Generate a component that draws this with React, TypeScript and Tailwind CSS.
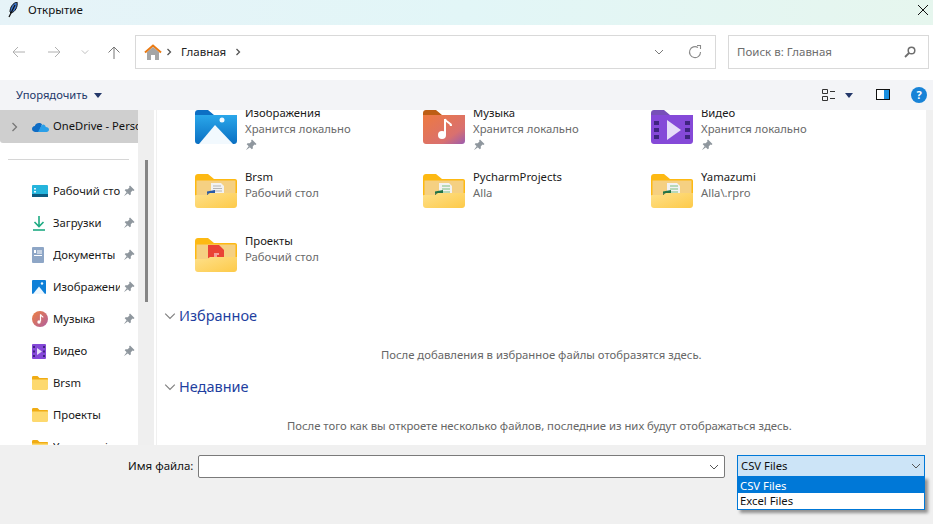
import React from "react";

const font = { fontFamily: '"Noto Sans", "Open Sans", sans-serif' };

function Pin({ className = "" }: { className?: string }) {
  return (
    <svg width="12" height="12" viewBox="0 0 12 12" className={className}>
      <path d="M7 .5 11.500 5 10.500 5.900 9.600 5.500 7.800 7.300 7.800 9.500 6.800 10.300 1.700 5.200 2.500 4.200 4.700 4.200 6.500 2.400 6.100 1.500Z" fill="#8f979e" />
      <path d="M3.800 7 .8 11.200 5 8.200Z" fill="#8f979e" />
    </svg>
  );
}

function Chevron({ color = "#7a7a7a", size = 10 }: { color?: string; size?: number }) {
  return (
    <svg width={size} height={size} viewBox="0 0 10 10">
      <path d="M1 3 5 7 9 3" fill="none" stroke={color} strokeWidth="1" />
    </svg>
  );
}

function SmallFolder() {
  return (
    <svg width="16" height="14" viewBox="0 0 16 14">
      <path d="M0 1.500C0 .7.5 0 1.200 0H5.500L7.500 2H15C15.600 2 16 2.400 16 3V5H0Z" fill="#f0ac14" />
      <path d="M0 3.500H16V12.800C16 13.500 15.500 14 14.800 14H1.200C.5 14 0 13.500 0 12.800Z" fill="#fdd96f" />
    </svg>
  );
}

function BigFolder({ kind }: { kind: "doc" | "sheet" | "red" }) {
  return (
    <svg width="42" height="34" viewBox="0 0 42 34">
      <path d="M0 3C0 1.300 1.300 0 3 0H13L19 5H40C41.200 5 42 5.800 42 7V22H0Z" fill="#fdb913" />
      <path d="M1.500 6.500H40.500V22H1.500Z" fill="#f5d082" />
      {kind === "doc" && (
        <g>
          <path d="M16 9H26L29 12V20H16Z" fill="#f2f2f2" />
          <path d="M18 12H26M18 14.500H27M18 17H27" stroke="#b5b5b5" strokeWidth="1" />
          <path d="M12 17.500 20 16V19.500H12Z" fill="#2a5aa6" />
          <path d="M12 19.500H16V22H12Z" fill="#21497f" />
        </g>
      )}
      {kind === "sheet" && (
        <g>
          <path d="M16 9H26L29 12V20H16Z" fill="#f2f2f2" />
          <path d="M19 11H27V13H19ZM19 14H27V16H19ZM19 17H27V19H19Z" fill="#b7d8b8" />
          <path d="M12 17.500 20 16V19.500H12Z" fill="#217346" />
          <path d="M12 19.500H16V22H12Z" fill="#185c37" />
        </g>
      )}
      {kind === "red" && (
        <g>
          <path d="M13 7H24L29 12V22H13Z" fill="#ea4335" />
          <path d="M19 16H24M19 18H22" stroke="#fff" strokeWidth="1.200" />
        </g>
      )}
      <path d="M0 22C0 21.300.5 21 1.200 21H12L15 19H42V31C42 32.700 40.700 34 39 34H3C1.300 34 0 32.700 0 31Z" fill="url(#fg)" />
      <defs>
        <linearGradient id="fg" x1="0" y1="0" x2="1" y2="1">
          <stop offset="0" stopColor="#fee08a" />
          <stop offset="1" stopColor="#fdca49" />
        </linearGradient>
      </defs>
    </svg>
  );
}

function PicturesBig() {
  return (
    <svg width="42" height="34" viewBox="0 0 42 34">
      <path d="M0 3C0 1.300 1.300 0 3 0H13L19 5H40L42 8H0Z" fill="#0c6fc4" />
      <path d="M0 5H42V31C42 32.700 40.700 34 39 34H3C1.300 34 0 32.700 0 31Z" fill="url(#pb)" />
      <path d="M4 34 20 15 38 34Z" fill="#f2f9fe" />
      <circle cx="27" cy="10" r="2.500" fill="#f2f9fe" />
      <defs>
        <linearGradient id="pb" x1="0" y1="0" x2="0" y2="1">
          <stop offset="0" stopColor="#2aa7ea" />
          <stop offset="1" stopColor="#0a6fc2" />
        </linearGradient>
      </defs>
    </svg>
  );
}

function MusicBig() {
  return (
    <svg width="42" height="34" viewBox="0 0 42 34">
      <path d="M0 3C0 1.300 1.300 0 3 0H13L19 5H40L42 8H0Z" fill="#bd5e14" />
      <path d="M0 5H42V31C42 32.700 40.700 34 39 34H3C1.300 34 0 32.700 0 31Z" fill="url(#mb)" />
      <path d="M22 9V25" stroke="#fff" strokeWidth="2" />
      <path d="M22 9C23 13 28 12 28 16" fill="none" stroke="#fff" strokeWidth="2" />
      <circle cx="19" cy="25" r="4" fill="#fff" />
      <defs>
        <linearGradient id="mb" x1="0" y1="0" x2="1" y2="1">
          <stop offset="0" stopColor="#ee7a40" />
          <stop offset="0.700" stopColor="#d9706f" />
          <stop offset="1" stopColor="#9a5cb0" />
        </linearGradient>
      </defs>
    </svg>
  );
}

function VideoBig() {
  return (
    <svg width="42" height="34" viewBox="0 0 42 34">
      <path d="M0 3C0 1.300 1.300 0 3 0H13L19 5H40L42 8H0Z" fill="#7750b8" />
      <path d="M0 5H42V31C42 32.700 40.700 34 39 34H3C1.300 34 0 32.700 0 31Z" fill="#8549d8" />
      <path d="M3 11H8V15H3ZM3 18H8V22H3ZM3 25H8V29H3ZM34 11H39V15H34ZM34 18H39V22H34ZM34 25H39V29H34Z" fill="#3f2480" />
      <path d="M16 10 30 20 16 30Z" fill="#e6dcf8" />
    </svg>
  );
}

function Desktop() {
  return (
    <svg width="16" height="14" viewBox="0 0 16 14">
      <rect width="16" height="12" y="1" rx="1" fill="#25b4dc" />
      <rect y="10" width="16" height="3" fill="#0c5a80" />
      <path d="M2 4H4V5.500H2ZM2 7H4V8.500H2Z" fill="#e8f8ff" />
    </svg>
  );
}

function Download() {
  return (
    <svg width="14" height="15" viewBox="0 0 14 15">
      <path d="M7 0V10M2.500 6 7 10.500 11.500 6" fill="none" stroke="#1eab83" strokeWidth="1.600" />
      <path d="M1 14H13" stroke="#1eab83" strokeWidth="1.600" />
    </svg>
  );
}

function Docs() {
  return (
    <svg width="13" height="16" viewBox="0 0 13 16">
      <rect width="12" height="16" rx="1" fill="#8ea6c6" />
      <path d="M5 4H10M5 6H10M2 8.500H10" stroke="#fff" strokeWidth="1" />
      <rect x="2" y="3" width="2" height="3" fill="#fff" />
    </svg>
  );
}

function Pictures() {
  return (
    <svg width="14" height="14" viewBox="0 0 14 14">
      <rect width="14" height="14" rx="1" fill="#0f80d8" />
      <path d="M1 14 7 6.500 13 14Z" fill="#eef8ff" />
      <circle cx="10" cy="3.500" r="1.200" fill="#eef8ff" />
    </svg>
  );
}

function Music() {
  return (
    <svg width="16" height="16" viewBox="0 0 16 16">
      <circle cx="8" cy="8" r="8" fill="url(#ms)" />
      <path d="M8.500 3.500V10.500" stroke="#fff" strokeWidth="1.200" />
      <path d="M8.500 3.500C9 5.500 11 5 11 6.500" fill="none" stroke="#fff" strokeWidth="1.100" />
      <circle cx="7" cy="11" r="1.700" fill="#fff" />
      <defs>
        <linearGradient id="ms" x1="0" y1="0" x2="1" y2="1">
          <stop offset="0" stopColor="#ee8040" />
          <stop offset="1" stopColor="#b05fa0" />
        </linearGradient>
      </defs>
    </svg>
  );
}

function Video() {
  return (
    <svg width="14" height="15" viewBox="0 0 14 15">
      <rect width="14" height="15" rx="1" fill="#8549d8" />
      <path d="M1 2H3V4H1ZM1 6.500H3V8.500H1ZM1 11H3V13H1ZM11 2H13V4H11ZM11 6.500H13V8.500H11ZM11 11H13V13H11Z" fill="#3f2480" />
      <path d="M5 4 10 7.500 5 11Z" fill="#e6dcf8" />
    </svg>
  );
}

function OneDrive() {
  return (
    <svg width="17" height="11" viewBox="0 0 17 11" className="shrink-0">
      <path d="M3.500 11C1.500 11 0 9.600 0 8 0 6.400 1.200 5.300 2.800 5.100 3.300 3.300 5 2 7 2 8.200 2 9.300 2.500 10 3.300L7 11Z" fill="#0f6cc4" />
      <path d="M6 11 9.500 4.500C11.300 2.500 13.300 4 13.800 6 15.600 6 17 7.100 17 8.600 17 10 16 11 14.500 11Z" fill="#2a9fe8" />
    </svg>
  );
}

function Feather() {
  return (
    <svg width="10" height="16" viewBox="0 0 10 16">
      <path d="M9 0C5 1 2 5 2 10L3 11C7 10 10 5 9 0Z" fill="#3a73c8" stroke="#111" strokeWidth="1" />
      <path d="M7 3 1 15" stroke="#111" strokeWidth="1.200" />
    </svg>
  );
}

function Home() {
  return (
    <svg width="18" height="17" viewBox="0 0 18 17">
      <path d="M3 8 9 3 15 8V16H11V11H7V16H3Z" fill="#a5a5a5" />
      <path d="M1 8.500 9 1.500 17 8.500" fill="none" stroke="#ea7a13" strokeWidth="2" />
    </svg>
  );
}

function ArrowLeft({ color }: { color: string }) {
  return (
    <svg width="14" height="12" viewBox="0 0 14 12">
      <path d="M13 6H1M6 1 1 6 6 11" fill="none" stroke={color} strokeWidth="1" />
    </svg>
  );
}

function ArrowRight({ color }: { color: string }) {
  return (
    <svg width="14" height="12" viewBox="0 0 14 12">
      <path d="M1 6H13M8 1 13 6 8 11" fill="none" stroke={color} strokeWidth="1" />
    </svg>
  );
}

function Crumb() {
  return (
    <svg width="6" height="8" viewBox="0 0 6 8">
      <path d="M1.500 1 4.500 4 1.500 7" fill="none" stroke="#555" strokeWidth="1.300" />
    </svg>
  );
}

const sideItems: { icon: React.ReactNode; label: string; pin: boolean }[] = [
  { icon: <Desktop />, label: "Рабочий стол", pin: true },
  { icon: <Download />, label: "Загрузки", pin: true },
  { icon: <Docs />, label: "Документы", pin: true },
  { icon: <Pictures />, label: "Изображения", pin: true },
  { icon: <Music />, label: "Музыка", pin: true },
  { icon: <Video />, label: "Видео", pin: true },
  { icon: <SmallFolder />, label: "Brsm", pin: false },
  { icon: <SmallFolder />, label: "Проекты", pin: false },
  { icon: <SmallFolder />, label: "Yamazumi", pin: false },
];

const tiles: { icon: React.ReactNode; name: string; sub: string; pin: boolean }[] = [
  { icon: <PicturesBig />, name: "Изображения", sub: "Хранится локально", pin: true },
  { icon: <MusicBig />, name: "Музыка", sub: "Хранится локально", pin: true },
  { icon: <VideoBig />, name: "Видео", sub: "Хранится локально", pin: true },
  { icon: <BigFolder kind="doc" />, name: "Brsm", sub: "Рабочий стол", pin: false },
  { icon: <BigFolder kind="sheet" />, name: "PycharmProjects", sub: "Alla", pin: false },
  { icon: <BigFolder kind="sheet" />, name: "Yamazumi", sub: "Alla\\.rpro", pin: false },
  { icon: <BigFolder kind="red" />, name: "Проекты", sub: "Рабочий стол", pin: false },
];

function Section({ title, text, indent }: { title: string; text: string; indent: string }) {
  return (
    <div>
      <div className="flex h-[22px] items-center gap-[3px] pl-[7px]">
        <Chevron size={12} color="#808080" />
        <span className="text-[14.5px] text-[#1f3fa0]">{title}</span>
      </div>
      <div className={`mt-[19px] h-[30px] text-[11.3px] leading-[18px] text-[#666] ${indent}`}>{text}</div>
    </div>
  );
}

export default function App() {
  return (
    <div style={font} className="relative flex h-[524px] w-[933px] flex-col overflow-hidden bg-[#f0f0f0] text-[11.5px] text-black">
      <div className="flex h-[25px] items-center bg-gradient-to-r from-[#e6f3f8] via-[#e2f6f7] to-[#e6f6ee] pb-[6px] pl-[8px] pr-[3px]">
        <Feather />
        <span className="ml-[10px] text-[11.5px] text-[#111]">Открытие</span>
        <svg className="ml-auto" width="14" height="14" viewBox="0 0 14 14">
          <path d="M2 2 12 12M12 2 2 12" stroke="#111" strokeWidth="1" />
        </svg>
      </div>

      <div className="flex h-[55px] items-center bg-white pb-[1px] pl-[12px] pr-[4px]">
        <ArrowLeft color="#b0b0b0" />
        <span className="ml-[21px]"><ArrowRight color="#b0b0b0" /></span>
        <span className="ml-[20px]"><Chevron color="#b0b0b0" size={8} /></span>
        <span className="ml-[18px]"><svg width="14" height="13" viewBox="0 0 14 13"><path d="M7 13V1M1.500 6.500 7 1 12.500 6.500" fill="none" stroke="#777" strokeWidth="1" /></svg></span>
        <div className="ml-[14px] flex h-[34px] w-[581px] shrink-0 items-center border border-[#d9d9d9] pl-[8px] pr-[13px]">
          <Home />
          <span className="ml-[4px]"><Crumb /></span>
          <span className="ml-[9px] text-[11.5px] text-[#222]">Главная</span>
          <span className="ml-[9px]"><Crumb /></span>
          <span className="ml-auto"><Chevron size={10} /></span>
          <svg className="ml-[24px]" width="14" height="14" viewBox="0 0 14 14">
            <path d="M12.500 7A5.500 5.500 0 1 1 10 2.500" fill="none" stroke="#8a8a8a" strokeWidth="1.100" />
            <path d="M9 .5H12.500V4" fill="none" stroke="#8a8a8a" strokeWidth="1.100" />
          </svg>
        </div>
        <div className="ml-[12px] flex h-[34px] w-[201px] shrink-0 items-center border border-[#d9d9d9] pl-[8px] pr-[12px]">
          <span className="text-[11.5px] text-[#6d6d6d]">Поиск в: Главная</span>
          <svg className="ml-auto" width="12" height="12" viewBox="0 0 12 12">
            <circle cx="7.500" cy="4.500" r="3.300" fill="none" stroke="#6e6e6e" strokeWidth="1.500" />
            <path d="M5 7 1 11" stroke="#6e6e6e" strokeWidth="1.800" />
          </svg>
        </div>
      </div>

      <div className="flex h-[30px] items-center bg-[#f3f4f7] pl-[16px] pr-[6px]">
        <span className="text-[11.2px] text-[#24386a]">Упорядочить</span>
        <svg className="ml-[6px]" width="8" height="5" viewBox="0 0 8 5"><path d="M0 0H8L4 5Z" fill="#24386a" /></svg>
        <svg className="ml-auto" width="14" height="14" viewBox="0 0 14 14">
          <path d="M.5 1.500H5.500V5.500H.5ZM.5 8.500H5.500V12.500H.5Z" fill="none" stroke="#333" strokeWidth="1" />
          <path d="M8 3.500H13M8 10.500H13" stroke="#333" strokeWidth="1" />
        </svg>
        <svg className="ml-[9px]" width="8" height="5" viewBox="0 0 8 5"><path d="M0 0H8L4 5Z" fill="#24386a" /></svg>
        <svg className="ml-[23px]" width="14" height="12" viewBox="0 0 14 12">
          <rect x=".5" y=".5" width="13" height="10" fill="#fff" stroke="#111" />
          <rect x="8" y="1" width="5" height="9" fill="#1a8fe0" />
        </svg>
        <span className="ml-[21px] flex h-[16px] w-[16px] items-center justify-center rounded-full bg-[#1883d7] text-[11px] font-bold text-white">?</span>
      </div>

      <div className="flex h-[335px] overflow-hidden">
        <div className="flex w-[138px] shrink-0 flex-col overflow-hidden bg-white">
          <div className="flex h-[33px] shrink-0 items-center overflow-hidden rounded-bl-[3px] bg-[#cfcfcf]">
            <span className="ml-[11px] w-[21px] shrink-0"><svg width="7" height="10" viewBox="0 0 7 10"><path d="M1.500 1 5.500 5 1.500 9" fill="none" stroke="#777" strokeWidth="1.300" /></svg></span>
            <OneDrive />
            <span className="ml-[4px] shrink-0 whitespace-nowrap text-[11.2px] text-[#111]">OneDrive - Personal</span>
          </div>
          <div className="ml-[8px] mt-[16px] h-px w-[121px] shrink-0 bg-[#d6d6d6]" />
          <div className="mt-[15px] flex flex-col">
            {sideItems.map((it) => (
              <div key={it.label} className="flex h-[32px] shrink-0 items-center">
                <span className="ml-[32px] flex w-[21px] shrink-0 items-center">{it.icon}</span>
                <span className="w-[67px] shrink-0 overflow-hidden whitespace-nowrap text-[11.3px] text-[#1a1a1a]">{it.label}</span>
                {it.pin && <Pin className="ml-[3px]" />}
              </div>
            ))}
          </div>
        </div>

        <div className="flex w-[16px] shrink-0 justify-center bg-[#efefef] pt-[50px]">
          <div className="h-[142px] w-[3px] bg-[#858585]" />
        </div>
        <div className="w-[2px] shrink-0 bg-white" />
        <div className="w-px shrink-0 bg-[#f0f0f0]" />

        <div className="flex w-[769px] shrink-0 flex-col overflow-hidden bg-white">
          <div className="grid grid-cols-[228px_228px_228px] auto-rows-[64px] pl-[38px]">
            {tiles.map((t) => (
              <div key={t.name} className="flex items-start gap-[8px]">
                <span className="shrink-0">{t.icon}</span>
                <div className="-mt-[5px] flex flex-col">
                  <span className="h-[16px] text-[11.3px] leading-[16px] text-[#1a1a1a]">{t.name}</span>
                  <span className="h-[16px] text-[11.3px] leading-[16px] text-[#6a6a6a]">{t.sub}</span>
                  {t.pin && <span className="flex h-[16px] items-center"><Pin /></span>}
                </div>
              </div>
            ))}
          </div>
          <div className="mt-[3px]">
            <Section title="Избранное" text="После добавления в избранное файлы отобразятся здесь." indent="pl-[224px]" />
            <Section title="Недавние" text="После того как вы откроете несколько файлов, последние из них будут отображаться здесь." indent="pl-[130px]" />
          </div>
        </div>
        <div className="flex-1 bg-[#f0f0f0]" />
      </div>

      <div className="flex flex-1 items-start pl-[128px] pt-[10px]">
        <span className="w-[66px] text-[11.5px] leading-[22px] text-[#111]">Имя файла:</span>
        <div className="ml-[4px] flex h-[23px] w-[527px] items-center justify-end rounded-[2px] border border-[#7a7a7a] bg-white pr-[5px]">
          <Chevron size={10} color="#555" />
        </div>
        <div className="relative ml-[12px] w-[188px]">
          <div className="flex h-[22px] items-center justify-between border border-[#0078d7] bg-[#cce4f7] pl-[3px] pr-[3px]">
            <span className="text-[11.3px] text-[#111]">CSV Files</span>
            <Chevron size={10} color="#555" />
          </div>
          <div className="absolute left-0 top-[21px] w-[188px] border border-[#0078d7] bg-white shadow-[3px_3px_3px_rgba(0,0,0,0.4)]">
            <div className="h-[16px] bg-[#0078d7] pl-[2px] text-[11.3px] leading-[17px] text-white">CSV Files</div>
            <div className="h-[16px] pl-[2px] text-[11.3px] leading-[16px] text-[#111]">Excel Files</div>
          </div>
        </div>
      </div>
    </div>
  );
}
